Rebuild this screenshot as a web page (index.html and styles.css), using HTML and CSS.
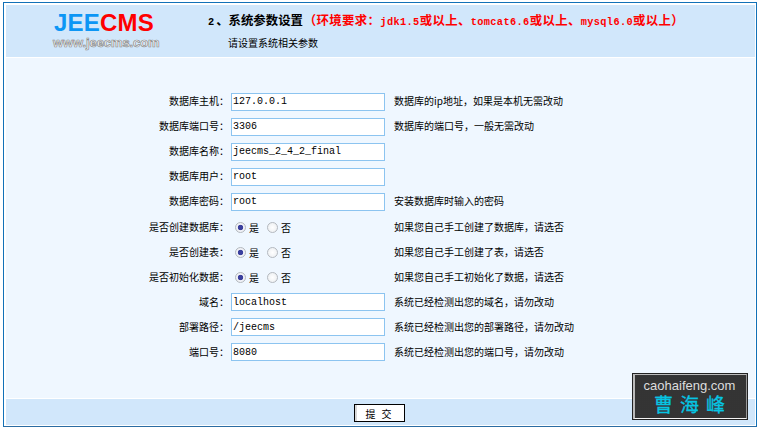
FILE: index.html
```html
<!DOCTYPE html>
<html lang="zh-CN">
<head>
<meta charset="utf-8">
<title>JEECMS</title>
<link rel="stylesheet" href="styles.css">
</head>
<body>
<form class="frame">
  <header class="top">
    <div class="logo">
      <div class="logo-name"><span class="blue">JEE</span><span class="red">CMS</span></div>
      <div class="logo-url">www.jeecms.com</div>
    </div>
    <div class="heads">
      <div class="step"><span class="m">2</span>、系统参数设置 <span class="req">（环境要求：<span class="m">jdk1.5</span>或以上、<span class="m">tomcat6.6</span>或以上、<span class="m">mysql6.0</span>或以上）</span></div>
      <div class="sub">请设置系统相关参数</div>
    </div>
  </header>
  <main class="body">
    <div class="row"><label>数据库主机：</label><input class="txt" value="127.0.0.1"><span class="hint">数据库的ip地址，如果是本机无需改动</span></div>
    <div class="row"><label>数据库端口号：</label><input class="txt" value="3306"><span class="hint">数据库的端口号，一般无需改动</span></div>
    <div class="row"><label>数据库名称：</label><input class="txt" value="jeecms_2_4_2_final"><span class="hint"></span></div>
    <div class="row"><label>数据库用户：</label><input class="txt" value="root"><span class="hint"></span></div>
    <div class="row"><label>数据库密码：</label><input class="txt" value="root"><span class="hint">安装数据库时输入的密码</span></div>
    <div class="row"><label>是否创建数据库：</label><div class="radios"><input type="radio" name="a" checked><span class="yes">是</span><input type="radio" name="a"><span>否</span></div><span class="hint">如果您自己手工创建了数据库，请选否</span></div>
    <div class="row"><label>是否创建表：</label><div class="radios"><input type="radio" name="b" checked><span class="yes">是</span><input type="radio" name="b"><span>否</span></div><span class="hint">如果您自己手工创建了表，请选否</span></div>
    <div class="row"><label>是否初始化数据：</label><div class="radios"><input type="radio" name="c" checked><span class="yes">是</span><input type="radio" name="c"><span>否</span></div><span class="hint">如果您自己手工初始化了数据，请选否</span></div>
    <div class="row"><label>域名：</label><input class="txt" value="localhost"><span class="hint">系统已经检测出您的域名，请勿改动</span></div>
    <div class="row"><label>部署路径：</label><input class="txt" value="/jeecms"><span class="hint">系统已经检测出您的部署路径，请勿改动</span></div>
    <div class="row"><label>端口号：</label><input class="txt" value="8080"><span class="hint">系统已经检测出您的端口号，请勿改动</span></div>
  </main>
  <footer class="bottom">
    <button type="button" class="submit">提 交</button>
  </footer>
  <div class="mark">
    <div class="mark-url">caohaifeng.com</div>
    <div class="mark-name">曹海峰</div>
  </div>
</form>
</body>
</html>
```

FILE: styles.css
```css
* { box-sizing: border-box; }
html, body { margin: 0; padding: 0; background: #fff; }
body {
  width: 760px;
  height: 429px;
  overflow: hidden;
  padding: 2px 3px 2px 3px;
  font-family: "Noto Sans CJK SC", "Liberation Sans", sans-serif;
  font-size: 10px;
  color: #000;
}
.frame {
  position: relative;
  width: 754px;
  height: 425px;
  border: 1px solid #1171b8;
  border-bottom-color: #2a6ca3;
  padding: 2px 1px 1px 2px;
  display: flex;
  flex-direction: column;
  gap: 1px;
}
.top {
  height: 52px;
  background: #d1e7fb;
  display: flex;
  flex: none;
}
.logo { width: 202px; flex: none; padding: 6px 0 0 46px; }
.logo-name {
  font: bold 24px/24px "Liberation Sans", sans-serif;
  letter-spacing: 0.2px;
  padding-left: 2px;
  height: 25px;
}
.blue { color: #0c96f5; }
.red { color: #f00; }
.logo-url {
  font: bold 13px/14px "Liberation Sans", sans-serif;
  color: #fff;
  -webkit-text-stroke: 0.7px #8a8a8a;
  white-space: nowrap;
  letter-spacing: -0.1px;
  padding-left: 1px;
}
.heads { padding-top: 7px; }
.step {
  font-size: 12.4px;
  line-height: 16px;
  font-weight: bold;
  white-space: nowrap;
  word-spacing: -2px;
}
.step > .m { margin-right: 2px; }
.req { color: #f00; letter-spacing: 0.37px; }
.m { font-family: "Liberation Mono", monospace; font-size: 10.3px; font-weight: bold; }
.sub { padding: 6px 0 0 20px; line-height: 14px; }
.body {
  flex: 1;
  background: #eff7ff;
  padding-top: 31px;
}
.row {
  display: grid;
  grid-template-columns: 223px 165px 1fr;
  align-items: center;
  height: 25.1px;
}
.row label { text-align: right; margin-top: -2px; white-space: nowrap; }
.txt {
  width: 154px;
  height: 18px;
  margin: 0 0 0 2px;
  padding: 0 1px;
  border: 1px solid #8cc4f0;
  background: #fff;
  font: 10px "Liberation Mono", monospace;
  color: #000;
  border-radius: 0;
  outline: none;
}
.hint { margin-top: -2px; white-space: nowrap; padding-left: 0; }
.radios {
  display: flex;
  align-items: center;
  padding-left: 6px;
  margin-top: 1px;
}
.radios input {
  appearance: none;
  width: 11px;
  height: 11px;
  margin: 0 3px 0 0;
  border-radius: 50%;
  border: 1px solid #b4b9bf;
  background: radial-gradient(circle, #fff 0, #e9ecef 100%);
}
.radios input:checked {
  background: radial-gradient(circle, #3a3f9e 0, #3a3f9e 38%, #f2f3f8 48%, #e9ecef 100%);
}
.radios span { width: 12px; }
.radios .yes { margin-right: 6px; }
.bottom {
  height: 26px;
  flex: none;
  background: #d1e7fb;
  display: flex;
  justify-content: center;
  align-items: center;
  padding: 2px 2px 0 0;
}
.submit {
  width: 51px;
  height: 18px;
  margin: 0;
  padding: 0;
  border: 1px solid #000;
  background: #fff;
  box-shadow: inset 2px 0 0 #d8d8d8;
  font: 10px "Noto Sans CJK SC", sans-serif;
  color: #000;
  letter-spacing: 2px;
  border-radius: 0;
}
.mark {
  position: absolute;
  left: 628px;
  top: 370px;
  width: 116px;
  height: 47px;
  border-top: 2px solid #bbb;
  border-left: 3px solid #bbb;
  border-right: 2px solid #999;
  border-bottom: 2px solid #f4f4f4;
  outline: 1px solid #222;
  outline-offset: -1px;
  background-color: #222;
  background-image: radial-gradient(circle, #4a4a4a 0.6px, transparent 0.8px);
  background-size: 2px 2px;
  text-align: center;
  overflow: hidden;
}
.mark-url {
  font: 13px/15px "Liberation Sans", sans-serif;
  color: #ddd;
  margin-top: 3px;
  margin-left: -2px;
}
.mark-name {
  font: 19px/22px "Noto Sans CJK SC", sans-serif;
  color: #06c6e4;
  letter-spacing: 7px;
  padding-left: 5px;
  -webkit-text-stroke: 0.3px #06c6e4;
}
```
